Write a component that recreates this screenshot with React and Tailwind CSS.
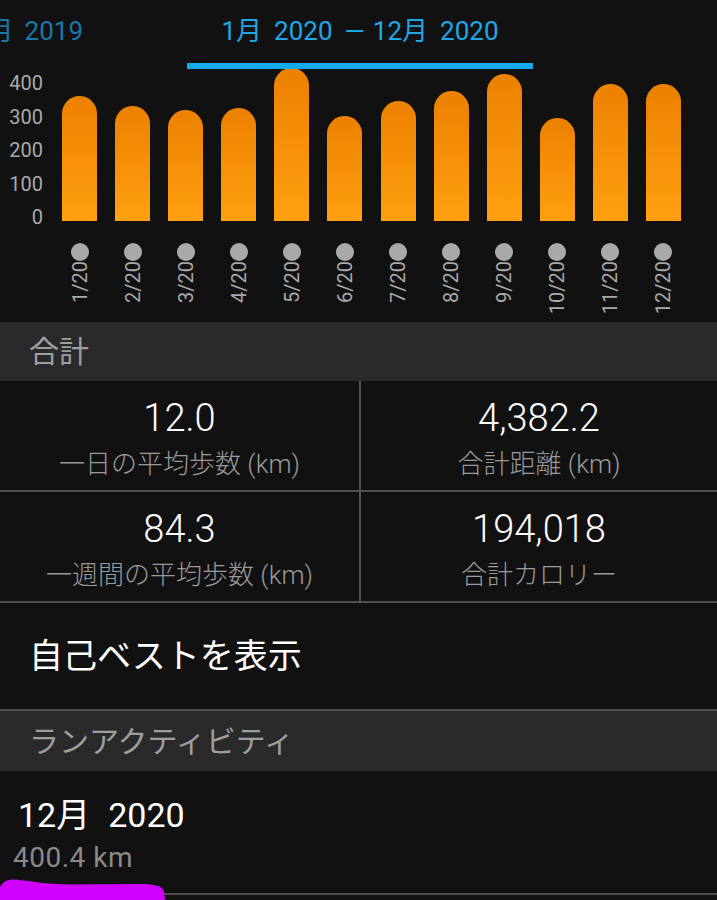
import React from "react";

const bars = [
  { label: "1/20", h: 125 },
  { label: "2/20", h: 115 },
  { label: "3/20", h: 111 },
  { label: "4/20", h: 113 },
  { label: "5/20", h: 153 },
  { label: "6/20", h: 105 },
  { label: "7/20", h: 120 },
  { label: "8/20", h: 130 },
  { label: "9/20", h: 147 },
  { label: "10/20", h: 103 },
  { label: "11/20", h: 137 },
  { label: "12/20", h: 137 },
];

function Cell({ value, label, border }) {
  return (
    <div
      className={
        "flex flex-col items-center pt-[15px] " +
        (border ? "w-[361px] border-r-2 border-[#4f4f4f]" : "flex-1")
      }
    >
      <div className="text-[38px] font-light leading-[44px] text-white">{value}</div>
      <div className="mt-[8px] text-[26px] font-light leading-[32px] text-[#9a9a9a] whitespace-nowrap">{label}</div>
    </div>
  );
}

export default function App() {
  return (
    <div className="relative w-[717px] h-[900px] overflow-hidden bg-[#111111] font-['Roboto','Noto_Sans_CJK_JP',sans-serif]">
      {/* header */}
      <div className="relative h-[63px]">
        <div className="absolute right-[634px] top-0 h-[63px] flex items-center pb-[1px] whitespace-nowrap text-[26px] text-[#1878a8]">
          1月<span className="ml-[11px]">2019</span>
        </div>
        <div className="ml-[187px] w-[346px] h-[63px] flex items-center justify-center pb-[1px] whitespace-nowrap text-[26px] text-[#1ea6e6]">
          1月<span className="ml-[12px]">2020</span>
          <span className="ml-[12px]">—</span>
          <span className="ml-[8px]">12月</span>
          <span className="ml-[12px]">2020</span>
        </div>
      </div>
      <div className="relative z-10 ml-[187px] w-[346px] h-[6px] bg-[#14a9ea]" />

      {/* chart */}
      <div className="flex h-[254px] -mt-[1px]">
        <div className="w-[53px] flex flex-col items-end pr-[10px] pt-[5px] gap-[13.5px] text-[20px] leading-[20px] text-[#a9a9a9]">
          <div>400</div>
          <div>300</div>
          <div>200</div>
          <div>100</div>
          <div>0</div>
        </div>
        <div className="grid grid-cols-12 w-[637px]">
          {bars.map((b) => (
            <div key={b.label} className="flex flex-col items-center">
              <div className="h-[153px] flex items-end">
                <div
                  className="w-[35px] rounded-t-full bg-linear-to-b from-[#ec8000] to-[#ffa010]"
                  style={{ height: b.h }}
                />
              </div>
              <div className="mt-[22px] w-[18px] h-[18px] rounded-full bg-[#a9a9a9]" />
              <div className="[writing-mode:vertical-rl] rotate-180 text-[20px] leading-[20px] text-[#a9a9a9] whitespace-nowrap">
                {b.label}
              </div>
            </div>
          ))}
        </div>
      </div>

      {/* 合計 band */}
      <div className="h-[59px] bg-[#2a2a2a] flex items-center pl-[29px] text-[30px] text-[#9e9e9e]">
        合計
      </div>

      {/* stats grid */}
      <div className="flex h-[111px] border-b-2 border-[#4f4f4f]">
        <Cell value="12.0" label="一日の平均歩数 (km)" border />
        <Cell value="4,382.2" label="合計距離 (km)" />
      </div>
      <div className="flex h-[111px] border-b-2 border-[#4f4f4f]">
        <Cell value="84.3" label="一週間の平均歩数 (km)" border />
        <Cell value="194,018" label="合計カロリー" />
      </div>

      {/* 自己ベスト */}
      <div className="h-[108px] flex items-center pl-[29px] border-b-2 border-[#4f4f4f] text-[34px] text-white">
        自己ベストを表示
      </div>

      {/* ランアクティビティ band */}
      <div className="h-[60px] bg-[#2a2a2a] flex items-center pl-[29px] text-[30px] text-[#9e9e9e]">
        ランアクティビティ
      </div>

      {/* item */}
      <div className="h-[124px] border-b-2 border-[#4f4f4f] pt-[25px]">
        <div className="pl-[18px] text-[34px] leading-[38px] text-white whitespace-nowrap">
          12月<span className="ml-[18px]">2020</span>
        </div>
        <div className="mt-[8px] pl-[13px] text-[28px] leading-[32px] text-[#8a8a8a] tracking-[0.5px]">
          400.4 km
        </div>
      </div>

      {/* marker scribble */}
      <svg className="absolute left-0 top-[876px]" width="170" height="24" viewBox="0 0 170 24">
        <path
          d="M0,11 C2,6 8,3 14,3.5 C30,4.5 45,8.5 70,8.5 L140,8 C155,8 163,10 164,16 L165,24 L0,24 Z"
          fill="#d000ff"
        />
      </svg>
    </div>
  );
}
